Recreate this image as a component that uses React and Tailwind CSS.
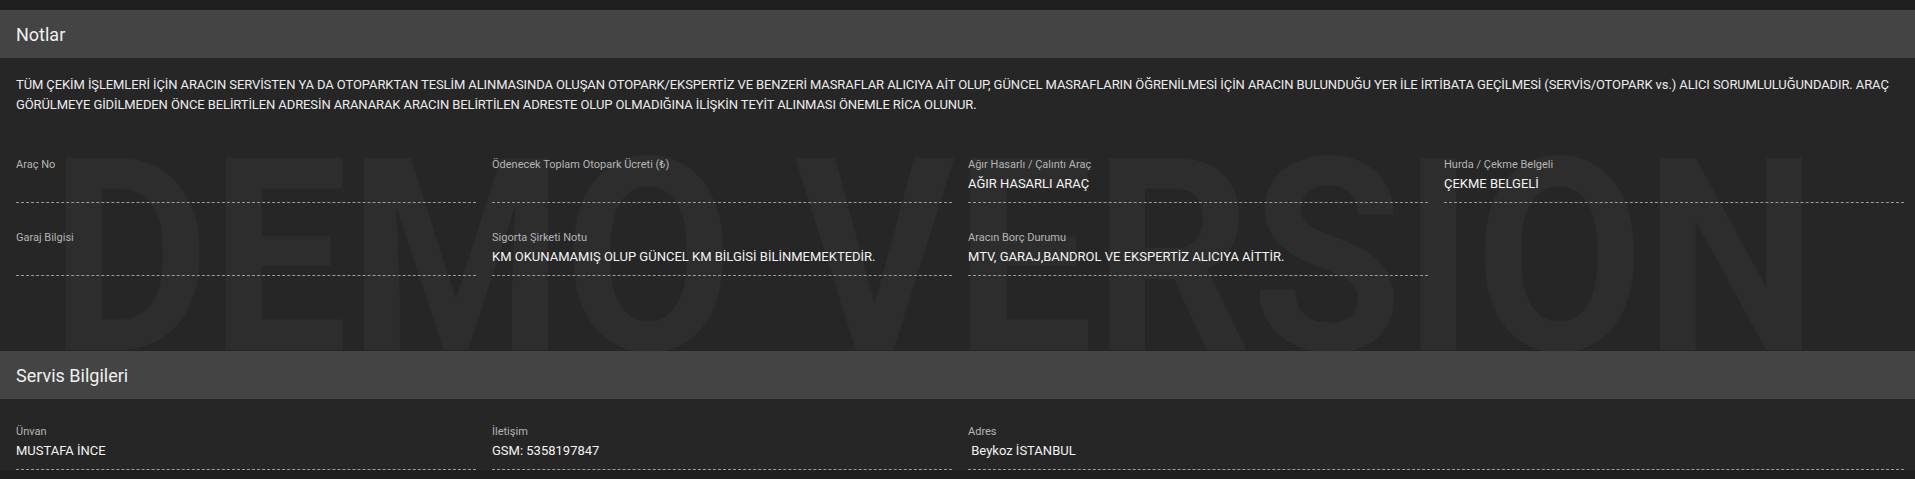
import React from 'react';

const notes =
  "TÜM ÇEKİM İŞLEMLERİ İÇİN ARACIN SERVİSTEN YA DA OTOPARKTAN TESLİM ALINMASINDA OLUŞAN OTOPARK/EKSPERTİZ VE BENZERİ MASRAFLAR ALICIYA AİT OLUP, GÜNCEL MASRAFLARIN ÖĞRENİLMESİ İÇİN ARACIN BULUNDUĞU YER İLE İRTİBATA GEÇİLMESİ (SERVİS/OTOPARK vs.) ALICI SORUMLULUĞUNDADIR. ARAÇ GÖRÜLMEYE GİDİLMEDEN ÖNCE BELİRTİLEN ADRESİN ARANARAK ARACIN BELİRTİLEN ADRESTE OLUP OLMADIĞINA İLİŞKİN TEYİT ALINMASI ÖNEMLE RİCA OLUNUR.";

// Notlar alanları
const noteFields = [
  { label: "Araç No", value: "" },
  { label: "Ödenecek Toplam Otopark Ücreti (₺)", value: "" },
  { label: "Ağır Hasarlı / Çalıntı Araç", value: "AĞIR HASARLI ARAÇ" },
  { label: "Hurda / Çekme Belgeli", value: "ÇEKME BELGELİ" },
  { label: "Garaj Bilgisi", value: "" },
  { label: "Sigorta Şirketi Notu", value: "KM OKUNAMAMIŞ OLUP GÜNCEL KM BİLGİSİ BİLİNMEMEKTEDİR." },
  { label: "Aracın Borç Durumu", value: "MTV, GARAJ,BANDROL VE EKSPERTİZ ALICIYA AİTTİR." },
];

const Field = ({ label, value, className = "" }) => (
  <div className={`border-b border-dashed border-[#9a9a9a] pb-[8px] ${className}`}>
    <div className="text-[11px] leading-[16px] text-[#b5b5b5]">{label}</div>
    <div className="mt-[1px] min-h-[20px] whitespace-pre text-[13px] leading-[20px] text-[#f4f4f4]">
      {value}
    </div>
  </div>
);

const SectionHeader = ({ title }) => (
  <div className="flex h-[48px] items-center bg-[#444444] px-4 text-[18px] text-[#f0f0f0]">
    {title}
  </div>
);

export default function App() {
  return (
    <div
      className="h-[479px] overflow-hidden bg-[#1f1f1f] pt-[10px]"
      style={{ fontFamily: "Roboto, 'Noto Sans', sans-serif" }}
    >
      <div className="bg-[#262626]">
        <SectionHeader title="Notlar" />
        <div className="relative overflow-hidden px-4 pt-[17px] pb-[75px]">
          {/* Watermark */}
          <div className="pointer-events-none absolute left-[50px] top-[89px] origin-bottom scale-y-[1.1] select-none text-[246px] font-bold leading-none text-[#2d2d2d]">
            DEMO VERSION
          </div>
          <div className="relative">
            <p className="text-[13px] leading-[20px] tracking-[-0.1px] text-[#ececec]">{notes}</p>
            <div className="mt-[42px] grid grid-cols-[repeat(4,460px)] gap-x-4 gap-y-[27px]">
              {noteFields.map((f, i) => (
                <Field key={i} label={f.label} value={f.value} />
              ))}
            </div>
          </div>
        </div>
        <SectionHeader title="Servis Bilgileri" />
        <div className="px-4 pt-[25px]">
          <div className="grid grid-cols-[repeat(4,460px)] gap-x-4">
            <Field label="Ünvan" value="MUSTAFA İNCE" />
            <Field label="İletişim" value="GSM: 5358197847" />
            <Field label="Adres" value=" Beykoz İSTANBUL" className="col-span-2" />
          </div>
        </div>
      </div>
    </div>
  );
}
